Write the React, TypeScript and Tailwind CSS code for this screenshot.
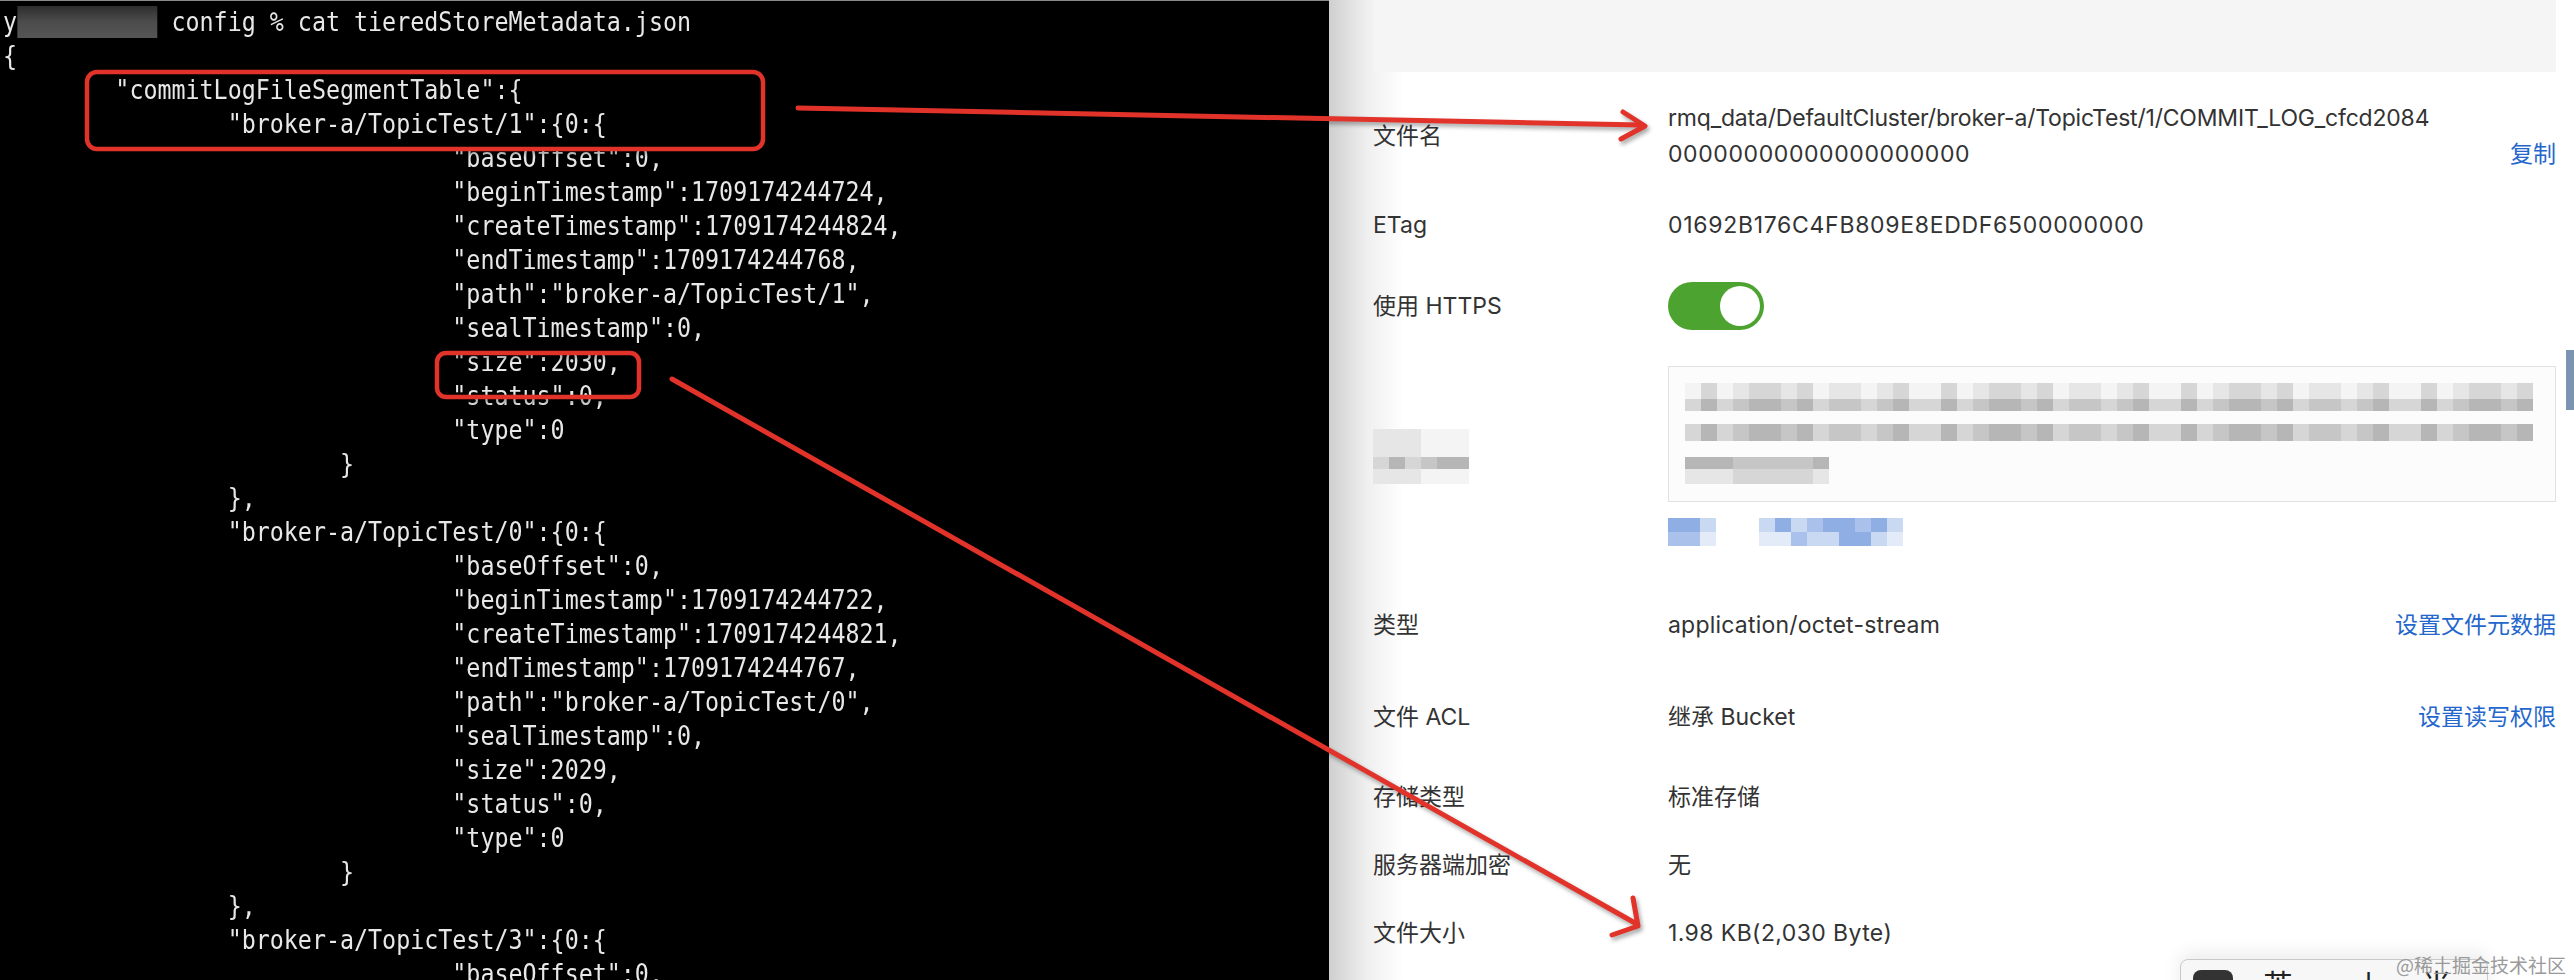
import React from "react";

const TERMINAL_LINES = [
  "{",
  "\t\"commitLogFileSegmentTable\":{",
  "\t\t\"broker-a/TopicTest/1\":{0:{",
  "\t\t\t\t\"baseOffset\":0,",
  "\t\t\t\t\"beginTimestamp\":1709174244724,",
  "\t\t\t\t\"createTimestamp\":1709174244824,",
  "\t\t\t\t\"endTimestamp\":1709174244768,",
  "\t\t\t\t\"path\":\"broker-a/TopicTest/1\",",
  "\t\t\t\t\"sealTimestamp\":0,",
  "\t\t\t\t\"size\":2030,",
  "\t\t\t\t\"status\":0,",
  "\t\t\t\t\"type\":0",
  "\t\t\t}",
  "\t\t},",
  "\t\t\"broker-a/TopicTest/0\":{0:{",
  "\t\t\t\t\"baseOffset\":0,",
  "\t\t\t\t\"beginTimestamp\":1709174244722,",
  "\t\t\t\t\"createTimestamp\":1709174244821,",
  "\t\t\t\t\"endTimestamp\":1709174244767,",
  "\t\t\t\t\"path\":\"broker-a/TopicTest/0\",",
  "\t\t\t\t\"sealTimestamp\":0,",
  "\t\t\t\t\"size\":2029,",
  "\t\t\t\t\"status\":0,",
  "\t\t\t\t\"type\":0",
  "\t\t\t}",
  "\t\t},",
  "\t\t\"broker-a/TopicTest/3\":{0:{",
  "\t\t\t\t\"baseOffset\":0,",
];

const GRAYS = [
  "bg-[#f4f4f4]",
  "bg-[#e6e6e6]",
  "bg-[#d6d6d6]",
  "bg-[#c6c6c6]",
  "bg-[#b6b6b6]",
];

const BLUES = [
  "bg-[#e3ebf8]",
  "bg-[#c9d9f2]",
  "bg-[#a9c1eb]",
  "bg-[#8eaee4]",
];

// pixelated "mosaic" strip used for the redacted bits
function Mosaic({
  cells,
  seed,
  base,
  spread,
  h,
  palette = GRAYS,
}: {
  cells: number;
  seed: number;
  base: number;
  spread: number;
  h: string;
  palette?: string[];
}) {
  return (
    <div className={`flex ${h}`}>
      {Array.from({ length: cells }).map((_, i) => {
        const idx = Math.min(palette.length - 1, base + ((i * 7 + seed * 3 + ((i * i) % 5)) % spread));
        return <div key={i} className={`w-[16px] h-full ${palette[idx]}`} />;
      })}
    </div>
  );
}

function Terminal() {
  return (
    <div className="w-[1329px] shrink-0 flex flex-col bg-black">
      <div className="h-[8px] bg-[#efefef] border-b border-[#8a8a8a]" />
      <div className="pt-[4px] pl-[3px]">
        <pre className="origin-left scale-x-[0.897] font-['DejaVu_Sans_Mono',monospace] text-[26px] leading-[34px] text-[#e8e8e8] [tab-size:8]">
          <div>
            y
            <span className="inline-block align-middle w-[10ch] h-[32px] -mt-[4px] bg-gradient-to-b from-[#2e2e2e] via-[#4c4c4c] to-[#555555]" />
            {" config % cat tieredStoreMetadata.json"}
          </div>
          {TERMINAL_LINES.map((l, i) => (
            <div key={i}>{l}</div>
          ))}
        </pre>
      </div>
    </div>
  );
}

function Row({
  label,
  children,
  link,
  className = "",
}: {
  label: React.ReactNode;
  children: React.ReactNode;
  link?: string;
  className?: string;
}) {
  return (
    <div className={`flex items-center h-[36px] ${className}`}>
      <div className="w-[295px] shrink-0 text-[#333333]">{label}</div>
      <div className="flex-1 text-[#333333]">{children}</div>
      {link && <div className="text-[#2467cc]">{link}</div>}
    </div>
  );
}

function DetailPanel() {
  return (
    <div className="relative flex-1 flex flex-col pl-[44px] pr-[18px] bg-white font-[Inter,'Noto_Sans_CJK_SC',sans-serif] text-[23px] leading-[36px]">
      {/* shadow thrown by the terminal window */}
      <div className="absolute inset-y-0 left-0 w-[75px] bg-gradient-to-r from-[#cfcfcf] via-[#efefef] to-transparent" />

      <div className="relative h-[72px] bg-[#f5f5f5]" />

      {/* 文件名 */}
      <div className="relative mt-[28px] flex items-center">
        <div className="w-[295px] shrink-0 text-[#333333]">文件名</div>
        <div className="flex-1 text-[#333333]">
          <div className="tracking-[-0.2px]">rmq_data/DefaultCluster/broker-a/TopicTest/1/COMMIT_LOG_cfcd2084</div>
          <div className="tracking-[0.6px]">00000000000000000000</div>
        </div>
        <div className="self-end text-[#2467cc]">复制</div>
      </div>

      <Row label="ETag" className="relative mt-[35px]">
        <span className="tracking-[0.7px]">01692B176C4FB809E8EDDF6500000000</span>
      </Row>

      {/* 使用 HTTPS */}
      <div className="relative mt-[39px] flex items-center h-[48px]">
        <div className="w-[295px] shrink-0 text-[#333333]">使用 HTTPS</div>
        <div className="w-[96px] h-[48px] rounded-full bg-[#4ca330] flex items-center justify-end pr-[4px]">
          <div className="w-[40px] h-[40px] rounded-full bg-white" />
        </div>
      </div>

      {/* redacted metadata block */}
      <div className="relative mt-[36px] flex items-center">
        <div className="w-[295px] shrink-0 flex flex-col">
          <Mosaic cells={6} seed={1} base={0} spread={2} h="h-[28px]" />
          <Mosaic cells={6} seed={2} base={2} spread={3} h="h-[12px]" />
          <Mosaic cells={6} seed={3} base={0} spread={2} h="h-[15px]" />
        </div>
        <div className="flex-1 flex flex-col">
          <div className="h-[136px] border border-[#e2e2e2] bg-[#fcfcfc] pt-[16px] pl-[16px]">
            <Mosaic cells={53} seed={1} base={0} spread={3} h="h-[16px]" />
            <Mosaic cells={53} seed={2} base={2} spread={3} h="h-[12px]" />
            <div className="h-[13px]" />
            <Mosaic cells={53} seed={4} base={2} spread={3} h="h-[17px]" />
            <div className="h-[16px]" />
            <Mosaic cells={9} seed={5} base={3} spread={2} h="h-[12px]" />
            <Mosaic cells={9} seed={6} base={1} spread={2} h="h-[15px]" />
          </div>
          <div className="mt-[16px] flex gap-[43px]">
            <div className="flex flex-col">
              <Mosaic cells={3} seed={1} base={0} spread={4} h="h-[14px]" palette={BLUES} />
              <Mosaic cells={3} seed={2} base={0} spread={4} h="h-[14px]" palette={BLUES} />
            </div>
            <div className="flex flex-col">
              <Mosaic cells={9} seed={3} base={1} spread={3} h="h-[14px]" palette={BLUES} />
              <Mosaic cells={9} seed={4} base={0} spread={4} h="h-[14px]" palette={BLUES} />
            </div>
          </div>
        </div>
      </div>

      <Row label="类型" link="设置文件元数据" className="relative mt-[61px]">
        <span className="tracking-[0.2px]">application/octet-stream</span>
      </Row>
      <Row label="文件 ACL" link="设置读写权限" className="relative mt-[56px]">
        继承 Bucket
      </Row>
      <Row label="存储类型" className="relative mt-[44px]">
        标准存储
      </Row>
      <Row label="服务器端加密" className="relative mt-[32px]">
        无
      </Row>
      <Row label="文件大小" className="relative mt-[32px]">
        <span className="tracking-[0.4px]">1.98 KB(2,030 Byte)</span>
      </Row>

      {/* scrollbar thumb */}
      <div className="absolute right-0 top-[350px] w-[8px] h-[60px] bg-[#7c93b1]" />

      {/* floating input bar peeking from the bottom */}
      <div className="absolute left-[851px] top-[959px] w-[308px] h-[40px] rounded-t-[8px] border border-[#c9c9c9] bg-[#f7f7f7] shadow-[0_-6px_18px_rgba(0,0,0,0.08)] overflow-hidden flex items-start gap-[30px] pl-[12px] pt-[10px] text-[#222] text-[30px] leading-[30px]">
        <div className="w-[40px] h-[24px] rounded-[8px] bg-[#333]" />
        <span>英</span>
        <span>·</span>
        <span>乚</span>
        <span>尚</span>
      </div>
      <div className="absolute right-[8px] top-[954px] text-[19px] leading-[22px] text-[#9a9a9a] font-['Noto_Sans_CJK_SC',sans-serif]">
        @稀土掘金技术社区
      </div>
    </div>
  );
}

function Annotations() {
  return (
    <svg
      className="absolute inset-0 pointer-events-none"
      width={2574}
      height={980}
      viewBox="0 0 2574 980"
      fill="none"
    >
      <g
        className="drop-shadow-[2px_3px_2px_rgba(0,0,0,0.35)]"
        stroke="#e2332a"
        strokeWidth={5}
        strokeLinecap="round"
        strokeLinejoin="round"
      >
        <rect x={87} y={72} width={676} height={77} rx={10} strokeWidth={4.5} />
        <rect x={437} y={353} width={202} height={44} rx={9} strokeWidth={4.5} />
        <path d="M798 108 L1641 125" />
        <path d="M1623 112 L1645 126 L1621 139" />
        <path d="M672 379 L1635 923" />
        <path d="M1633 898 L1638 926 L1612 935" />
      </g>
    </svg>
  );
}

export default function App() {
  return (
    <div className="relative flex w-[2574px] h-[980px] overflow-hidden bg-white">
      <Terminal />
      <DetailPanel />
      <Annotations />
    </div>
  );
}
